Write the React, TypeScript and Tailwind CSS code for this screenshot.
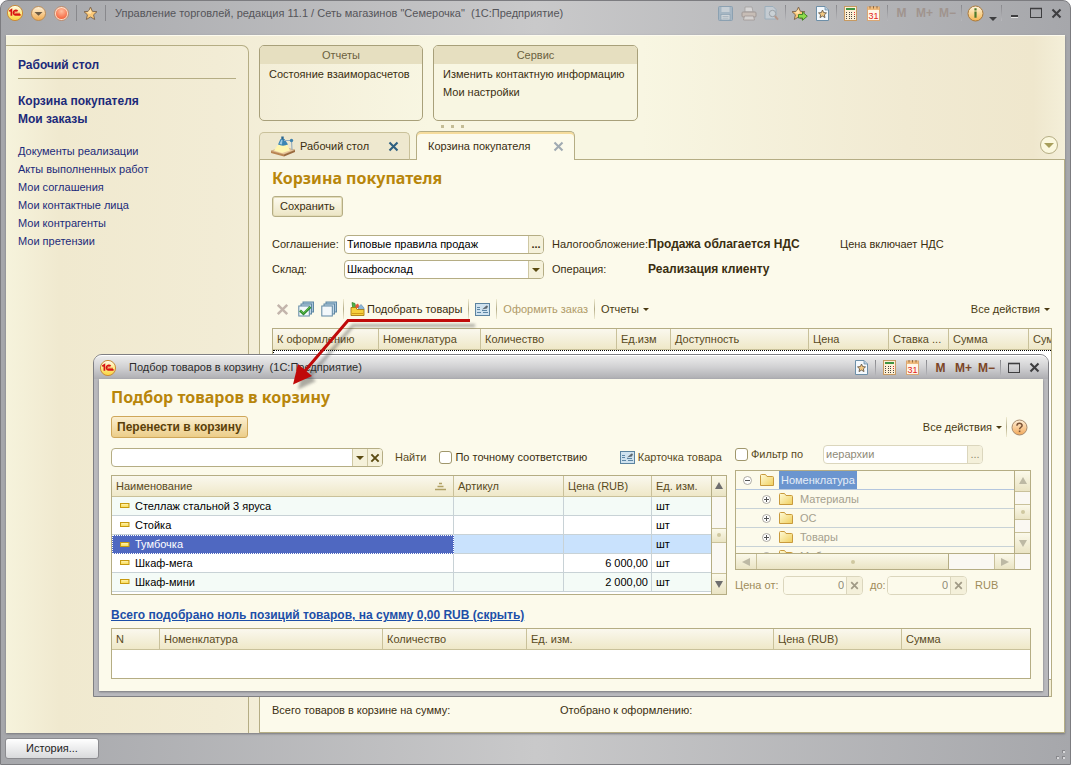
import React from "react";

/* ---------- icons ---------- */

const Logo1C = () => (
  <svg width="18" height="18" viewBox="0 0 18 18" className="shrink-0">
    <defs>
      <linearGradient id="logoG" x1="0" y1="0" x2="0" y2="1">
        <stop offset="0" stopColor="#fffdf0" />
        <stop offset="0.5" stopColor="#fdeb8a" />
        <stop offset="1" stopColor="#fbd23c" />
      </linearGradient>
    </defs>
    <circle cx="9" cy="9" r="7.6" fill="url(#logoG)" stroke="#c98a3a" />
    <path d="M3.3 7.2 L5.4 5.8 V11.8" fill="none" stroke="#d81414" strokeWidth="1.7" />
    <path d="M11.6 7.3 A2.3 2.3 0 1 0 9.4 10.9 H14.6" fill="none" stroke="#d81414" strokeWidth="1.6" />
    <path d="M10.6 8.2 A1 1 0 1 0 9.6 9.3 H14" fill="none" stroke="#d81414" strokeWidth="0.8" />
  </svg>
);

const RoundDown = () => (
  <svg width="17" height="17" viewBox="0 0 17 17" className="shrink-0">
    <defs>
      <linearGradient id="rdG" x1="0" y1="0" x2="0" y2="1">
        <stop offset="0" stopColor="#fff3dc" />
        <stop offset="1" stopColor="#f0a94c" />
      </linearGradient>
    </defs>
    <circle cx="8.500" cy="8.500" r="7" fill="url(#rdG)" stroke="#b98b57" />
    <path d="M4.500 7 h8 l-4 3.800z" fill="#6b5a44" />
  </svg>
);

const RoundRed = () => (
  <svg width="17" height="17" viewBox="0 0 17 17" className="shrink-0">
    <defs>
      <radialGradient id="rrG" cx="0.5" cy="0.3" r="0.7">
        <stop offset="0" stopColor="#ffc0a0" />
        <stop offset="1" stopColor="#f4633c" />
      </radialGradient>
    </defs>
    <circle cx="8.500" cy="8.500" r="7" fill="#ffe2cc" stroke="#b9876a" />
    <circle cx="8.500" cy="8.500" r="5.600" fill="url(#rrG)" />
  </svg>
);

const starPath = "M7.500 1 L9.400 5.300 L14 5.700 L10.600 8.800 L11.700 13.500 L7.500 11 L3.300 13.500 L4.400 8.800 L1 5.700 L5.600 5.300Z";

const Star = ({ arrow = false }: { arrow?: boolean }) => (
  <svg width="17" height="15" viewBox="0 0 17 15" className="shrink-0">
    <path d={starPath} fill="#fbc877" stroke="#806a52" strokeWidth="1" />
    <path d="M7.500 3 L8.700 6.200 L7.500 8 L4 7Z" fill="#ffe3ae" />
    {arrow && (
      <path d="M7.500 8.500 H11.500 V6 L16.300 10.200 L11.500 14.300 V12 H7.500Z" fill="#8ddc4c" stroke="#3c7d24" strokeWidth="0.9" />
    )}
  </svg>
);

const FavPage = () => (
  <svg width="13" height="15" viewBox="0 0 13 15" className="shrink-0">
    <path d="M.5 .5 H9 L12.500 4 V14.500 H.5Z" fill="#f4f9fd" stroke="#6d8fa8" />
    <path d="M9 .5 V4 H12.500" fill="#b9cfdf" stroke="#6d8fa8" strokeWidth="0.8" />
    <path d="M6.500 4 L7.700 6.600 L10.500 6.900 L8.400 8.800 L9 11.600 L6.500 10.100 L4 11.600 L4.600 8.800 L2.500 6.900 L5.300 6.600Z" fill="#f3c983" stroke="#5a4c3c" strokeWidth="0.8" />
  </svg>
);

const Calc = () => (
  <svg width="13" height="15" viewBox="0 0 13 15" className="shrink-0">
    <rect x=".5" y=".5" width="12" height="14" fill="#fdf0d6" stroke="#c79a62" />
    <rect x="2" y="2" width="9" height="2" fill="#3f9442" />
    {[6, 8, 10, 12].map((y) =>
      [2, 5, 7, 10].map((x) => (
        <rect key={`${x}-${y}`} x={x} y={y} width="1" height="1" fill={x > 9 && y < 9 ? "#d33" : "#4c4640"} />
      ))
    )}
  </svg>
);

const Calendar = () => (
  <svg width="13" height="15" viewBox="0 0 13 15" className="shrink-0">
    <rect x=".5" y="1" width="12" height="13.500" fill="#fff6e8" stroke="#d9a774" />
    <rect x="1" y="1" width="11" height="3" fill="#f0bb7c" />
    <path d="M3 0V2.500M6.500 0V2.500M10 0V2.500" stroke="#8a6238" strokeWidth="0.9" />
    <text x="6.500" y="12.600" textAnchor="middle" fontSize="9" fill="#e2231a" fontFamily="Liberation Sans, sans-serif">31</text>
  </svg>
);

const Floppy = () => (
  <svg width="15" height="15" viewBox="0 0 15 15" className="shrink-0 opacity-50">
    <rect x=".5" y=".5" width="14" height="14" rx="1" fill="#8fb0c8" stroke="#5c86a5" />
    <rect x="3.500" y="1" width="8" height="5" fill="#d3e2ec" />
    <rect x="3" y="8.500" width="9" height="5.500" fill="#e4edf3" stroke="#5c86a5" strokeWidth="0.7" />
    <path d="M4.500 10.500h6M4.500 12.200h6" stroke="#7f9db2" strokeWidth="0.7" />
  </svg>
);

const Printer = () => (
  <svg width="16" height="15" viewBox="0 0 16 15" className="shrink-0 opacity-50">
    <path d="M4 1 H11 L12 6 H4Z" fill="#f3f0ee" stroke="#8c8582" strokeWidth="0.8" />
    <rect x="1" y="6" width="14" height="5" rx="1" fill="#d3bfb0" stroke="#85756c" />
    <path d="M3.500 10 H12.500 L13.500 14 H2.500Z" fill="#eee8e3" stroke="#85756c" strokeWidth="0.8" />
  </svg>
);

const Preview = () => (
  <svg width="15" height="15" viewBox="0 0 15 15" className="shrink-0 opacity-50">
    <path d="M1 .5 H9 L12 3.500 V13 H1Z" fill="#cfdde7" stroke="#7fa3bb" />
    <circle cx="8.500" cy="7.500" r="3.200" fill="#dbe8ef" stroke="#7e8a92" />
    <path d="M10.800 10 L14 13.700" stroke="#b3775a" strokeWidth="2" />
  </svg>
);

const Info = () => (
  <svg width="17" height="17" viewBox="0 0 17 17" className="shrink-0">
    <defs>
      <linearGradient id="inG" x1="0" y1="0" x2="0" y2="1">
        <stop offset="0" stopColor="#fff6dd" />
        <stop offset="1" stopColor="#f5b54f" />
      </linearGradient>
    </defs>
    <circle cx="8.500" cy="8.500" r="7.500" fill="url(#inG)" stroke="#a8793d" />
    <path d="M8.500 3.200v2.200M8.500 6.500v6.300" stroke="#4c7a2c" strokeWidth="2.200" />
  </svg>
);

const Help = () => (
  <svg width="17" height="17" viewBox="0 0 17 17" className="shrink-0">
    <defs>
      <linearGradient id="hlG" x1="0" y1="0" x2="0" y2="1">
        <stop offset="0" stopColor="#fff0d8" />
        <stop offset="1" stopColor="#f2a95a" />
      </linearGradient>
    </defs>
    <circle cx="8.500" cy="8.500" r="7.500" fill="url(#hlG)" stroke="#a88b6d" />
    <path d="M5.900 6.700 C5.900 3.500 11.100 3.500 11.100 6.500 C11.100 8.300 8.600 8.200 8.600 10.200" fill="none" stroke="#7a5236" strokeWidth="1.500" />
    <rect x="7.800" y="11.500" width="1.600" height="1.600" fill="#7a5236" />
  </svg>
);

const Minimize = () => (
  <svg width="12" height="12" viewBox="0 0 12 12"><path d="M2 9h7" stroke="#3e3e40" strokeWidth="2" /><path d="M2 10.500h7" stroke="#e5e5e5" /></svg>
);
const Maximize = () => (
  <svg width="12" height="12" viewBox="0 0 12 12"><rect x=".5" y="1.500" width="11" height="9" fill="none" stroke="#3e3e40" /><path d="M0 1.500h12" stroke="#3e3e40" strokeWidth="1.600" /></svg>
);
const Cross = ({ color = "#3e3e40", size = 11 }: { color?: string; size?: number }) => (
  <svg width={size} height={size} viewBox="0 0 11 11" className="shrink-0"><path d="M1.500 1.500 L9.500 9.500 M9.500 1.500 L1.500 9.500" stroke={color} strokeWidth="2.100" /></svg>
);
const Tri = ({ color = "#4a3a12", w = 6 }: { color?: string; w?: number }) => (
  <svg width={w} height={w / 2} viewBox="0 0 6 3" className="shrink-0"><path d="M0 0h6L3 3z" fill={color} /></svg>
);
const Arrow = ({ d, color = "#6e6e6e" }: { d: string; color?: string }) => (
  <svg width="8" height="8" viewBox="0 0 8 8"><path d={d} fill={color} /></svg>
);
const UP = "M4 0 L8 7H0Z";
const DOWN = "M0 1H8L4 8Z";
const LEFT = "M8 0V8L0 4Z";
const RIGHT = "M0 0V8L8 4Z";

const DeskLamp = () => (
  <svg width="26" height="21" viewBox="0 0 26 21" className="shrink-0">
    <path d="M1 15 L13 11 L25 14 L14 18.500Z" fill="#e9c79d" stroke="#c39a6b" strokeWidth="0.6" />
    <path d="M1 15 V17 L14 20.500 V18.500Z" fill="#b98552" />
    <path d="M14 18.500 L25 14 V16 L14 20.500Z" fill="#9a6a3e" />
    <path d="M8.500 8 L17 8 L20 14.500 L12 17 L4 14.500Z" fill="#fff6b0" />
    <path d="M8 8.500 L10.500 3 H14.500 L18 8.500 C15 10 11 10 8 8.500Z" fill="#3c86b4" />
    <path d="M9.500 8 L11.500 3.500 H12.500 L12 8.500Z" fill="#9dcbe4" />
    <rect x="11.300" y=".5" width="2.400" height="3" fill="#2a668f" />
    <path d="M14 4.500 H21.500 L22 14" fill="none" stroke="#9ab0bf" strokeWidth="1.200" />
    <circle cx="21.500" cy="4.500" r="1.700" fill="#3f82ad" />
  </svg>
);

const Sheets = ({ check = false }: { check?: boolean }) => (
  <svg width="16" height="16" viewBox="0 0 16 16" className="shrink-0">
    <rect x="5" y="1" width="10.500" height="10" fill="#a9c6da" stroke="#5f87a4" />
    <rect x="3" y="3" width="10.500" height="10" fill="#c4d8e6" stroke="#5f87a4" />
    <rect x=".8" y="5" width="10.500" height="10" fill="#f3f8fb" stroke="#5f87a4" />
    {check && <path d="M2 9.500 L5.500 12.800 L12.500 5.800" fill="none" stroke="#2c8c2c" strokeWidth="2.600" />}
    {check && <path d="M2.500 9.500 L5.500 12.200 L12 5.800" fill="none" stroke="#6cc64f" strokeWidth="1" />}
  </svg>
);

const Basket = () => (
  <svg width="15" height="14" viewBox="0 0 15 14" className="shrink-0">
    <path d="M2 .5 L5 1.500 L6 8 H3Z" fill="#4fb548" stroke="#2d7d2a" strokeWidth="0.7" />
    <path d="M5.500 3 L8 1.500 L10 6 H5.500Z" fill="#e5573c" />
    <path d="M8.500 5 L11 2.500 L14 6 V8 H8.500Z" fill="#8db6d8" stroke="#587fa2" strokeWidth="0.6" />
    <path d="M1 5.500 H6 L7 7.500 H14 V13.500 H1Z" fill="#f6d03c" stroke="#a97c12" strokeWidth="0.9" />
    <path d="M2 11.500h11" stroke="#d19b1b" />
  </svg>
);

const CardIcon = () => (
  <svg width="15" height="13" viewBox="0 0 15 13" className="shrink-0">
    <rect x=".5" y=".5" width="14" height="12" fill="#cfe2ef" stroke="#5b83a0" />
    <path d="M2 4.500h3M2 6.500h3M2 9.500h4M8 9.500h5M7 7.500h5" stroke="#5d86a5" />
    <path d="M7 6.500 L11.500 2.500 L13 3 L12 5.500 L9 6Z" fill="#5d6870" />
  </svg>
);

const Folder = () => (
  <svg width="14" height="12" viewBox="0 0 14 12" className="shrink-0">
    <defs>
      <linearGradient id="foG" x1="0" y1="0" x2="1" y2="1">
        <stop offset="0" stopColor="#fffbd8" />
        <stop offset="1" stopColor="#f0cf5c" />
      </linearGradient>
    </defs>
    <path d="M.5 1.500 Q.5 .5 1.500 .5 H5.500 L7 2.500 H12.500 Q13.500 2.500 13.500 3.500 V11.500 H.5Z" fill="url(#foG)" stroke="#c99a3c" />
  </svg>
);

const NodeMark = ({ open = false }: { open?: boolean }) => (
  <svg width="9" height="9" viewBox="0 0 9 9" className="shrink-0">
    <circle cx="4.500" cy="4.500" r="4" fill="#fff" stroke="#a5a19a" strokeWidth="0.9" />
    <path d={open ? "M2 4.500h5" : "M2 4.500h5M4.500 2v5"} stroke="#555" />
  </svg>
);

const ItemMark = () => (
  <svg width="10" height="6" viewBox="0 0 10 6" className="shrink-0">
    <rect x=".5" y=".5" width="8.500" height="4" fill="#fbe26a" stroke="#c79a10" />
    <path d="M1.500 1.800h6.500" stroke="#fff7c4" strokeWidth="0.9" />
  </svg>
);

const SortMark = () => (
  <svg width="13" height="9" viewBox="0 0 13 9" className="shrink-0">
    <path d="M5 1.500h3M3.500 4.500h6M1 7.500h11" stroke="#b0a064" strokeWidth="1.600" />
  </svg>
);

/* ---------- small parts ---------- */

const Cell = ({ children, label, dim = false, narrow = false }: { children: React.ReactNode; label: string; dim?: boolean; narrow?: boolean }) => (
  <button type="button" aria-label={label} disabled={dim} className={`flex h-5 items-center justify-center ${narrow ? "w-[21px]" : "w-[23px]"}`}>
    {children}
  </button>
);
const BarSep = () => <span className="mx-0.5 h-4 w-px bg-gradient-to-b from-[#88888c] to-[#b8b8bc]" />;
const ToolSep = () => <span className="mx-1.5 h-5 w-px bg-gradient-to-b from-[#f0ecd2] via-[#b5ad8a] to-[#f0ecd2]" />;
const mem = "text-[12px] font-bold";

const DropText = ({ children }: { children: string }) => (
  <button type="button" className="flex items-center gap-1 text-[#4a3a12]">
    {children}
    <Tri />
  </button>
);

const head = "h-[21px] overflow-hidden border-r border-b border-[#c9c19a] bg-gradient-to-b from-[#faf8ee] to-[#efe8c8] pl-1 text-left font-normal whitespace-nowrap text-[#594a1c] last:border-r-0";
const scrollBtn = "flex items-center justify-center bg-gradient-to-b from-[#fbf9ea] to-[#eae4c4]";

const GroupCard = ({ title, items, className }: { title: string; items: string[]; className: string }) => (
  <section className={`h-[76px] overflow-hidden rounded-[5px] border border-[#a8a07a] ${className}`}>
    <h2 className="flex h-[18px] items-center justify-center bg-[#e6dfc0] text-[#6c6240]">{title}</h2>
    <ul className="px-[9px] pt-px">
      {items.map((t) => (
        <li key={t} className="h-[18px] leading-[18px] whitespace-nowrap">
          <a href="#">{t}</a>
        </li>
      ))}
    </ul>
  </section>
);

const sideLinks = ["Документы реализации", "Акты выполненных работ", "Мои соглашения", "Мои контактные лица", "Мои контрагенты", "Мои претензии"];

const basketCols: [string, string][] = [
  ["К оформлению", "w-[106px]"],
  ["Номенклатура", "w-[102px]"],
  ["Количество", "w-[136px]"],
  ["Ед.изм", "w-[54px]"],
  ["Доступность", "w-[138px]"],
  ["Цена", "w-[80px]"],
  ["Ставка ...", "w-[60px]"],
  ["Сумма", "w-[80px]"],
  ["Сум", ""],
];

const goods: [string, string][] = [
  ["Стеллаж стальной 3 яруса", ""],
  ["Стойка", ""],
  ["Тумбочка", ""],
  ["Шкаф-мега", "6 000,00"],
  ["Шкаф-мини", "2 000,00"],
];
const rowFill = ["bg-[#f4fbf7]", "bg-white", "bg-[#c9e2fd]", "bg-white", "bg-[#f4fbf7]"];

const pickedCols: [string, string][] = [
  ["N", "w-[48px]"],
  ["Номенклатура", "w-[223px]"],
  ["Количество", "w-[144px]"],
  ["Ед. изм.", "w-[247px]"],
  ["Цена (RUB)", "w-[128px]"],
  ["Сумма", ""],
];

const PriceBox = ({ label, id, indent = "" }: { label: string; id: string; indent?: string }) => (
  <>
    <label htmlFor={id} className={indent}>{label}</label>
    <span className="flex h-[19px] items-stretch overflow-hidden rounded-[4px] border border-[#dbd6bd]">
      <input id={id} disabled defaultValue="0" className="min-w-0 flex-1 bg-[#fcfaeb] px-0.5 text-right text-[#8f8a78]" />
      <button type="button" aria-label="Очистить" disabled className="flex w-4 items-center justify-center border-l border-[#dbd6bd] bg-[#f4f0da]">
        <Cross color="#a09a86" size={9} />
      </button>
    </span>
  </>
);

/* ---------- dialog ---------- */

const PickDialog = () => (
  <div role="dialog" aria-label="Подбор товаров в корзину" className="absolute top-[353px] right-[21px] left-[92px] rounded-t-[9px] border border-[#7f7f83] bg-[#b9b9bd] px-[5px] pb-[5px]">
    <header className="-mx-[5px] flex h-6 items-center rounded-t-[8px] border-t border-white bg-gradient-to-b from-[#ececec] via-[#d0d0d2] to-[#aeaeb2] pr-[3px] pl-[5px]">
      <Logo1C />
      <h2 className="ml-3 whitespace-pre text-[#2c2c2c]">Подбор товаров в корзину  (1С:Предприятие)</h2>
      <div className="ml-auto flex items-center">
        <Cell label="Избранное"><FavPage /></Cell>
        <BarSep />
        <Cell label="Калькулятор"><Calc /></Cell>
        <Cell label="Календарь"><Calendar /></Cell>
        <BarSep />
        <div className={`flex text-[#7c4526] ${mem}`}>
          <Cell label="M">M</Cell>
          <Cell label="M+">M+</Cell>
          <Cell label="M-">M−</Cell>
        </div>
        <BarSep />
        <Cell label="Развернуть" narrow><Maximize /></Cell>
        <Cell label="Закрыть" narrow><Cross /></Cell>
      </div>
    </header>

    <div className="bg-[#fcfaeb] px-3 pt-2 pb-3 shadow-[0_1px_2px_#77777b]">
      <h3 className="font-['Noto_Sans',sans-serif] text-[16px] leading-5 font-bold text-[#b8860b]">Подбор товаров в корзину</h3>
      <div className="mt-[9px] flex h-[22px] items-center">
        <button type="button" className="h-full rounded-[3px] border border-[#cfa75a] bg-gradient-to-b from-[#fbefd0] to-[#eccd88] px-[5px] text-[12px] font-bold text-[#5a3f0a]">
          Перенести в корзину
        </button>
        <div className="ml-auto flex items-center gap-1">
          <DropText>Все действия</DropText>
          <span className="h-5 w-px bg-gradient-to-b from-[#f0ecd2] via-[#b5ad8a] to-[#f0ecd2]" />
          <button type="button" aria-label="Справка" className="mr-[3px]"><Help /></button>
        </div>
      </div>

      <div className="mt-[7px] flex items-start gap-2">
        <div className="min-w-0 flex-1 pt-[3px]">
          <div className="flex h-[19px] items-center">
            <span className="flex h-[19px] w-[272px] items-stretch overflow-hidden rounded-[4px] border border-[#b5ad84] bg-white">
              <input aria-label="Строка поиска" className="min-w-0 flex-1 px-1" />
              <button type="button" aria-label="История поиска" className="flex w-[15px] items-center justify-center border-l border-[#cfc8a4] bg-[#f5f1da]"><Tri w={8} color="#5a4a10" /></button>
              <button type="button" aria-label="Очистить" className="flex w-[15px] items-center justify-center border-l border-[#cfc8a4] bg-[#f5f1da]"><Cross color="#5a4a10" size={10} /></button>
            </span>
            <button type="button" className="ml-3 text-[#594a1c]">Найти</button>
            <label className="ml-[13px] flex items-center gap-[3px]">
              <input type="checkbox" className="size-[13px] appearance-none rounded-[3px] border border-[#a0976c] bg-white" />
              По точному соответствию
            </label>
            <button type="button" className="mr-[5px] ml-auto flex items-center gap-[3px] text-[#594a1c]">
              <CardIcon />
              Карточка товара
            </button>
          </div>

          <div className="mt-2 flex h-[120px] border border-[#b5ad84] bg-white">
            <div className="min-w-0 flex-1">
              <table className="w-full table-fixed border-separate border-spacing-0">
                <thead>
                  <tr>
                    <th className={head}>
                      <span className="flex items-center justify-between pr-1.5">Наименование<SortMark /></span>
                    </th>
                    <th className={`${head} w-[110px]`}>Артикул</th>
                    <th className={`${head} w-[88px]`}>Цена (RUB)</th>
                    <th className={`${head} w-[59px]`}>Ед. изм.</th>
                  </tr>
                </thead>
                <tbody className="text-black">
                  {goods.map(([name, price], i) => {
                    const cell = `h-[19px] border-b border-[#c8d2d6] ${rowFill[i]}`;
                    return (
                      <tr key={name}>
                        <td className={i === 2 ? "h-[19px] border border-dotted border-white bg-[#4f68c1] text-white" : `${cell} border-r`}>
                          <span className={`flex items-center gap-[5px] ${i === 2 ? "pl-[7px]" : "pl-2"}`}><ItemMark />{name}</span>
                        </td>
                        <td className={`${cell} border-r`} />
                        <td className={`${cell} border-r pr-[3px] text-right`}>{price}</td>
                        <td className={`${cell} pl-1`}>шт</td>
                      </tr>
                    );
                  })}
                </tbody>
              </table>
            </div>
            <div className="flex w-[15px] flex-col border-l border-[#b5ad84] bg-[#faf8f2]">
              <span className={`${scrollBtn} h-[21px] border-b border-[#c9c19a]`}><Arrow d={UP} /></span>
              <span className="flex-1" />
              <span className={`${scrollBtn} h-[15px] border-y border-[#c9c19a]`}><i className="size-1 rounded-full bg-[#cfc8a0]" /></span>
              <span className="flex-1" />
              <span className={`${scrollBtn} h-[21px] border-t border-[#c9c19a]`}><Arrow d={DOWN} /></span>
            </div>
          </div>
        </div>

        <div className="w-[296px] shrink-0">
          <div className="flex h-[19px] items-center">
            <label className="flex items-center gap-[3px] text-[#594a1c]">
              <input type="checkbox" className="size-[13px] appearance-none rounded-[3px] border border-[#a0976c] bg-white" />
              Фильтр по
            </label>
            <span className="ml-5 flex h-[19px] w-40 items-stretch overflow-hidden rounded-[4px] border border-[#dbd6bd] bg-white">
              <input aria-label="Вид фильтра" disabled defaultValue="иерархии" className="min-w-0 flex-1 px-0.5 text-[#8f8a78]" />
              <button type="button" disabled aria-label="Выбрать" className="w-[15px] border-l border-[#dbd6bd] bg-[#f4f0da] text-[#8f8a6c]">...</button>
            </span>
          </div>

          <div className="mt-[6px] flex h-[100px] flex-col border border-[#b5ad84]">
            <div className="flex min-h-0 flex-1">
              <ul className="min-w-0 flex-1 overflow-hidden text-[#a5a08e]">
                <li className="flex h-[19px] items-center border-b border-[#b4c6de] pl-[7px]">
                  <NodeMark open />
                  <span className="mr-[5px] ml-2"><Folder /></span>
                  <span className="h-[18px] bg-[#6b95cf] px-0.5 leading-[18px] text-[#e6edf7]">Номенклатура</span>
                </li>
                {["Материалы", "ОС", "Товары", "Мебель"].map((t) => (
                  <li key={t} className="flex h-[19px] items-center border-b border-[#c8d2d6] pl-[26px]">
                    <NodeMark />
                    <span className="mr-[7px] ml-2"><Folder /></span>
                    {t}
                  </li>
                ))}
              </ul>
              <div className="flex w-4 flex-col border-l border-[#b5ad84] bg-[#faf8f2]">
                <span className={`${scrollBtn} h-[21px] border-b border-[#c9c19a]`}><Arrow d={UP} color="#bdb9a4" /></span>
                <span className="flex-1" />
                <span className={`${scrollBtn} h-4 border-y border-[#c9c19a]`}><i className="size-1 rounded-full bg-[#cfc8a0]" /></span>
                <span className="flex-1" />
                <span className={`${scrollBtn} h-[21px] border-t border-[#c9c19a]`}><Arrow d={DOWN} color="#bdb9a4" /></span>
              </div>
            </div>
            <div className="flex h-4 border-t border-[#b5ad84] bg-[#faf8f2]">
              <span className={`${scrollBtn} w-[21px] border-r border-[#c9c19a]`}><Arrow d={LEFT} color="#bdb9a4" /></span>
              <span className={`${scrollBtn} w-48 border-r border-[#b5ad84]`}><i className="size-1 rounded-full bg-[#cfc8a0]" /></span>
              <span className="flex-1" />
              <span className={`${scrollBtn} w-[21px] border-x border-[#c9c19a]`}><Arrow d={RIGHT} color="#bdb9a4" /></span>
              <span className="w-[15px]" />
            </div>
          </div>

          <div className="mt-[6px] grid grid-cols-[48px_80px_24px_80px_1fr] items-center text-[#a08c5a]">
            <PriceBox label="Цена от:" id="price-from" />
            <PriceBox label="до:" id="price-to" indent="pl-[7px]" />
            <span className="pl-2">RUB</span>
          </div>
        </div>
      </div>

      <a href="#" className="mt-3 block w-max text-[12px] leading-4 font-bold text-[#1c4fa8] underline">
        Всего подобрано ноль позиций товаров, на сумму 0,00 RUB (скрыть)
      </a>
      <div className="mt-[5px] h-[51px] border border-[#b5ad84] bg-white">
        <table className="w-full table-fixed border-separate border-spacing-0">
          <thead>
            <tr>
              {pickedCols.map(([t, w]) => (
                <th key={t} className={`${head} ${w}`}>{t}</th>
              ))}
            </tr>
          </thead>
        </table>
      </div>
    </div>
  </div>
);

/* ---------- page ---------- */

export default function App() {
  return (
    <div className="relative flex min-h-screen flex-col overflow-hidden rounded-t-[8px] border border-[#7c7c80] bg-gradient-to-r from-[#a6a7ab] via-[#c9c9ca] to-[#a6a7ab] font-['Liberation_Sans',Arial,sans-serif] text-[11px] text-[#3a2e10]">
      <header className="flex h-[34px] shrink-0 items-start pt-[2px] pr-[3px] pl-[5px]">
        <div className="flex h-5 items-center">
          <Logo1C />
          <button type="button" aria-label="Меню" className="ml-[6px]"><RoundDown /></button>
          <button type="button" aria-label="Закрыть окно" className="ml-[6px]"><RoundRed /></button>
          <span className="mx-[6px]"><span className="block h-4 w-px bg-[#88888c]" /></span>
          <button type="button" aria-label="Избранное"><Star /></button>
          <span className="mx-[5px]"><span className="block h-4 w-px bg-[#88888c]" /></span>
          <h1 className="ml-1 whitespace-pre text-[#55555a]">Управление торговлей, редакция 11.1 / Сеть магазинов "Семерочка"  (1С:Предприятие)</h1>
        </div>
        <div className="ml-auto flex h-5 items-center">
          <Cell label="Сохранить" dim><Floppy /></Cell>
          <Cell label="Печать" dim><Printer /></Cell>
          <Cell label="Просмотр" dim><Preview /></Cell>
          <BarSep />
          <Cell label="Добавить в избранное"><Star arrow /></Cell>
          <Cell label="Избранное"><FavPage /></Cell>
          <BarSep />
          <Cell label="Калькулятор"><Calc /></Cell>
          <Cell label="Календарь"><Calendar /></Cell>
          <BarSep />
          <div className={`flex text-[#a0948e] ${mem}`}>
            <Cell label="M" dim>M</Cell>
            <Cell label="M+" dim>M+</Cell>
            <Cell label="M-" dim>M−</Cell>
          </div>
          <BarSep />
          <Cell label="О программе"><Info /></Cell>
          <button type="button" aria-label="Ещё" className="flex h-5 w-3 items-end justify-center pb-0.5"><Tri w={8} color="#3e3e40" /></button>
          <BarSep />
          <Cell label="Свернуть" narrow><Minimize /></Cell>
          <Cell label="Развернуть" narrow><Maximize /></Cell>
          <Cell label="Закрыть" narrow><Cross /></Cell>
        </div>
      </header>

      <div className="mx-[5px] flex flex-1 border-t border-[#fdfbee] bg-[linear-gradient(90deg,#f6f3dc_0%,#f0e9cf_5%,#f2ecd5_20%,#f8f6e2_40%,#f8f6e2_60%,#f1ead2_85%,#efe7cd_97%,#f4efd9_100%)] pt-[9px] shadow-[0_1px_2px_#77777b]">
        <nav className="w-[243px] shrink-0 rounded-tr-[7px] border-t border-r border-[#b5ad84] px-3 pt-2.5 text-[#1c2a7a]">
          <div className="border-b border-[#b5ad84] pb-[4px] text-[12px] leading-[18px] font-bold"><a href="#">Рабочий стол</a></div>
          <ul className="pt-[13px] text-[12px] leading-[18px] font-bold">
            <li><a href="#">Корзина покупателя</a></li>
            <li><a href="#">Мои заказы</a></li>
          </ul>
          <ul className="pt-[14px] leading-[18px]">
            {sideLinks.map((t) => (
              <li key={t}><a href="#">{t}</a></li>
            ))}
          </ul>
        </nav>

        <main className="ml-[10px] flex min-w-0 flex-1 flex-col">
          <div className="flex gap-[10px]">
            <GroupCard title="Отчеты" items={["Состояние взаиморасчетов"]} className="w-[164px]" />
            <GroupCard title="Сервис" items={["Изменить контактную информацию", "Мои настройки"]} className="w-[205px]" />
          </div>
          <div className="flex h-[10px] items-center gap-[7px] pl-[182px]">
            <i className="size-[3px] bg-[#c4bd96]" />
            <i className="size-[3px] bg-[#c4bd96]" />
            <i className="size-[3px] bg-[#c4bd96]" />
          </div>

          <div className="flex items-end" role="tablist">
            <div className="flex h-7 w-[151px] items-center rounded-t-[5px] border border-[#c9c19a] border-b-[#b5ad84] bg-[#eee8cf] px-2.5">
              <DeskLamp />
              <button type="button" role="tab" className="ml-1">Рабочий стол</button>
              <button type="button" aria-label="Закрыть вкладку" className="ml-auto"><Cross color="#2e5f80" /></button>
            </div>
            <div className="w-[6px] self-stretch border-b border-[#b5ad84]" />
            <div className="flex h-[29px] w-[159px] items-center rounded-t-[5px] border border-b-0 border-[#b5ad84] bg-[#fcfaeb] pr-2.5 pl-[11px] shadow-[inset_0_2px_0_#f6dc9c]">
              <button type="button" role="tab" aria-selected="true">Корзина покупателя</button>
              <button type="button" aria-label="Закрыть вкладку" className="ml-auto"><Cross color="#a0aab2" /></button>
            </div>
            <div className="flex flex-1 items-center justify-end self-stretch border-b border-[#b5ad84] pr-[7px]">
              <button type="button" aria-label="Список вкладок" className="flex size-[18px] items-center justify-center rounded-full border border-[#b5ad84] bg-[#fbf8de]">
                <Tri w={10} color="#a89f5c" />
              </button>
            </div>
          </div>

          <div className="flex flex-1 flex-col border-x border-b border-[#b5ad84] bg-[#fcfaeb] px-3 pt-2 pb-[14px]">
            <h2 className="font-['Noto_Sans',sans-serif] text-[16px] leading-5 font-bold text-[#b8860b]">Корзина покупателя</h2>
            <div className="mt-2">
              <button type="button" className="h-[21px] rounded-[3px] border border-[#b5ad84] bg-gradient-to-b from-[#fdfbf0] to-[#ece5c4] px-[7px] shadow-[inset_0_0_0_1px_#e4ddb8]">Сохранить</button>
            </div>

            <div className="mt-[18px] grid grid-cols-[72px_200px_104px_192px_1fr] gap-y-[6px]">
              <label htmlFor="agreement" className="leading-[19px]">Соглашение:</label>
              <span className="flex h-[19px] items-stretch overflow-hidden rounded-[4px] border border-[#b5ad84] bg-white">
                <input id="agreement" defaultValue="Типовые правила продаж" className="min-w-0 flex-1 px-0.5 text-black" />
                <button type="button" aria-label="Выбрать" className="w-[15px] border-l border-[#cfc8a4] bg-[#f5f1da] font-bold">...</button>
              </span>
              <span className="pl-2 leading-[19px]">Налогообложение:</span>
              <b className="text-[12px] leading-[19px] whitespace-nowrap">Продажа облагается НДС</b>
              <span className="leading-[19px]">Цена включает НДС</span>

              <label htmlFor="store" className="leading-[19px]">Склад:</label>
              <span className="grid h-[19px] overflow-hidden rounded-[4px] border border-[#b5ad84] bg-white">
                <select id="store" className="col-start-1 row-start-1 appearance-none px-0.5 text-black"><option>Шкафосклад</option></select>
                <span className="pointer-events-none col-start-1 row-start-1 flex w-[15px] items-center justify-center justify-self-end border-l border-[#cfc8a4] bg-[#f5f1da]"><Tri w={8} color="#5a4a10" /></span>
              </span>
              <span className="pl-2 leading-[19px]">Операция:</span>
              <b className="text-[12px] leading-[19px]">Реализация клиенту</b>
            </div>

            <div className="mt-5 flex h-5 items-center">
              <button type="button" aria-label="Удалить" disabled className="ml-1"><Cross color="#c3b5ac" size={13} /></button>
              <button type="button" aria-label="Отметить все" className="ml-[9px]"><Sheets check /></button>
              <button type="button" aria-label="Снять отметки" className="ml-[7px]"><Sheets /></button>
              <ToolSep />
              <button type="button" className="flex items-center gap-0.5"><Basket />Подобрать товары</button>
              <ToolSep />
              <button type="button" aria-label="Карточка товара"><CardIcon /></button>
              <ToolSep />
              <button type="button" disabled className="text-[#b09a68]">Оформить заказ</button>
              <ToolSep />
              <DropText>Отчеты</DropText>
              <div className="mr-0.5 ml-auto"><DropText>Все действия</DropText></div>
            </div>

            <div className="mt-[9px] flex flex-1 flex-col overflow-hidden border border-[#b5ad84] bg-white">
              <table className="w-full table-fixed border-separate border-spacing-0">
                <thead>
                  <tr>
                    {basketCols.map(([t, w], i) => (
                      <th key={i} className={`${head} ${w}`}>{t}</th>
                    ))}
                  </tr>
                </thead>
              </table>
              <div className="flex-1 border-t border-l border-dotted border-black" />
              <div className="h-[17px] border-t border-[#b5ad84] bg-[#f3eed4]" />
            </div>

            <footer className="flex pt-[5px] leading-4">
              <span className="w-72">Всего товаров в корзине на сумму:</span>
              <span>Отобрано к оформлению:</span>
            </footer>
          </div>
        </main>
      </div>

      <footer className="flex h-[31px] shrink-0 items-center justify-between px-[4px]">
        <button type="button" className="h-[21px] w-[94px] rounded-[3px] border border-[#8b8b8f] bg-gradient-to-b from-white to-[#d9dadc] text-[#222]">История...</button>
        <svg width="11" height="11" viewBox="0 0 11 11" className="mb-1 self-end">
          <path d="M7 1h3v3h-3zM7 7h3v3h-3zM1 7h3v3h-3z" fill="#88888c" />
          <path d="M8 2h2v2h-2zM8 8h2v2h-2zM2 8h2v2h-2z" fill="#d8d8da" />
        </svg>
      </footer>

      <PickDialog />

      <svg width="200" height="80" viewBox="0 0 200 80" className="pointer-events-none absolute top-[314px] left-[279px]">
        <defs>
          <filter id="soft" x="-20%" y="-20%" width="140%" height="140%"><feGaussianBlur stdDeviation="1.5" /></filter>
        </defs>
        <g transform="translate(5 5)" opacity="0.4" filter="url(#soft)">
          <path d="M190 5.500 H68 L24 57" fill="none" stroke="#333" strokeWidth="3" />
          <path d="M13 69.500 L18 49 L31 61Z" fill="#333" />
        </g>
        <path d="M190 5.500 H68 L24 57" fill="none" stroke="#c00a0a" strokeWidth="3" />
        <path d="M13 69.500 L18 49 L32 61Z" fill="#c00a0a" />
      </svg>
    </div>
  );
}
